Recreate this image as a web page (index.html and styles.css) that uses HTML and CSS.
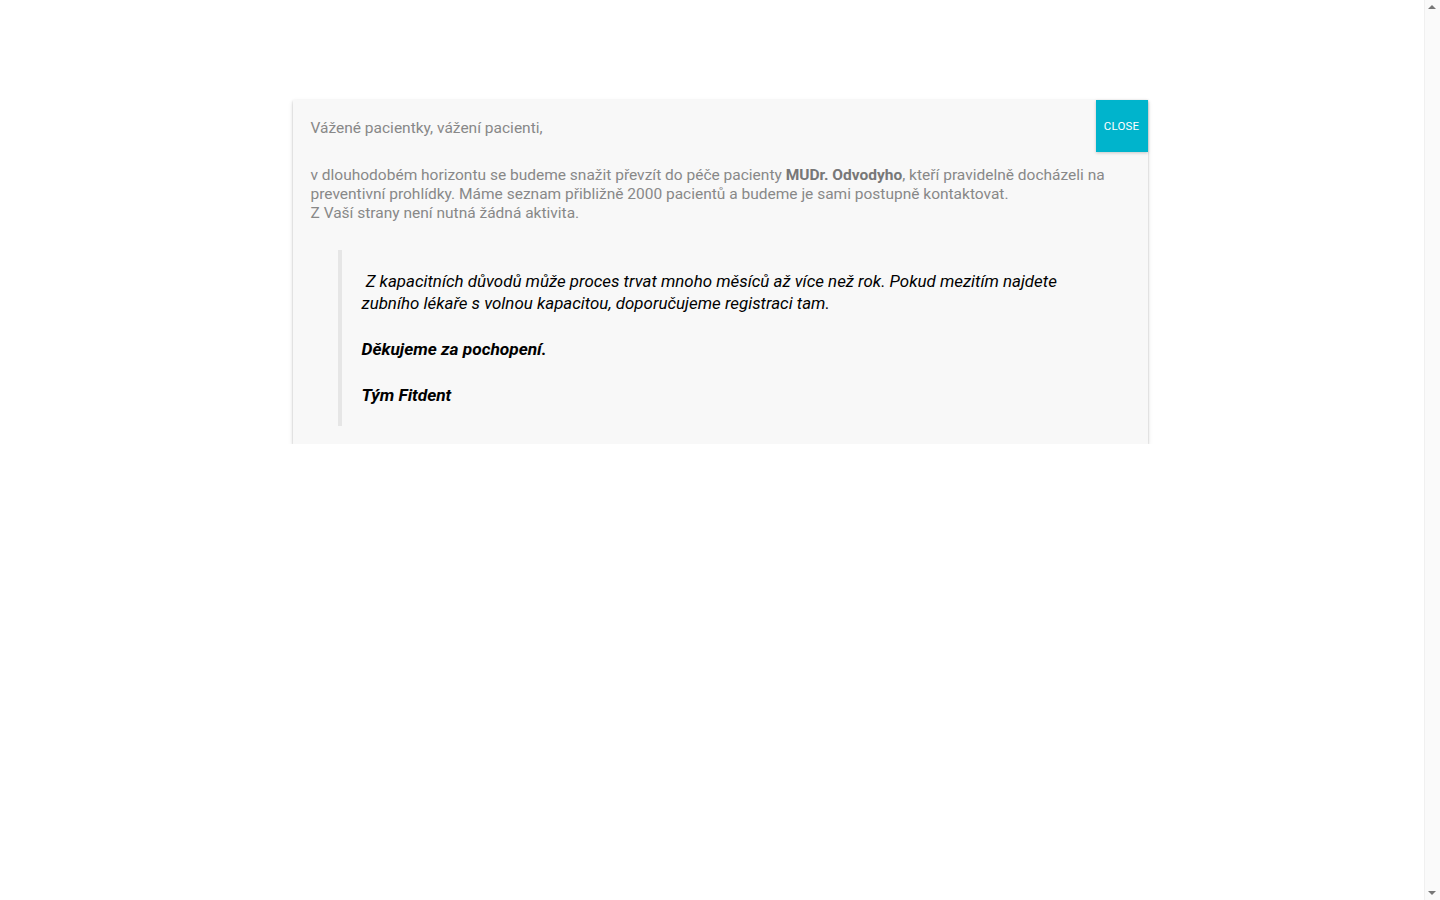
FILE: index.html
```html
<!DOCTYPE html>
<html lang="cs">
<head>
<meta charset="utf-8">
<title>Fitdent</title>
<link rel="stylesheet" href="styles.css">
</head>
<body>
<div class="page">
  <div class="modal">
    <button class="close" type="button">CLOSE</button>
    <div class="modal-body">
      <p class="greet">Vážené pacientky, vážení pacienti,</p>
      <p class="intro">v dlouhodobém horizontu se budeme snažit převzít do péče pacienty <strong>MUDr. Odvodyho</strong>, kteří pravidelně docházeli na preventivní prohlídky. Máme seznam přibližně 2000 pacientů a budeme je sami postupně kontaktovat.<br>Z Vaší strany není nutná žádná aktivita.</p>
      <blockquote class="quote">
        <p>&nbsp;Z kapacitních důvodů může proces trvat mnoho měsíců až více než rok. Pokud mezitím najdete zubního lékaře s volnou kapacitou, doporučujeme registraci tam.</p>
        <p><strong>Děkujeme za pochopení.</strong></p>
        <p><strong>Tým Fitdent</strong></p>
      </blockquote>
    </div>
  </div>
</div>
<div class="scrollbar" aria-hidden="true">
  <span class="arrow up"></span>
  <span class="arrow down"></span>
</div>
</body>
</html>
```
FILE: styles.css
```css
html {
  background: #fff;
}
body {
  margin: 0;
  font-family: Roboto, "Noto Sans", sans-serif;
}
.page {
  padding-top: 100px;
}
.modal {
  position: relative;
  width: 855px;
  margin: 0 auto;
  background: #f8f8f8;
  box-shadow: 0 1px 2px rgba(0, 0, 0, 0.2), 0 2px 5px rgba(0, 0, 0, 0.12);
}
.close {
  position: absolute;
  top: 0;
  right: 0;
  width: 52px;
  height: 52px;
  border: 0;
  padding: 0;
  background: #00b4cc;
  color: #fff;
  font-family: Roboto, sans-serif;
  font-size: 11.5px;
  letter-spacing: 0.2px;
  box-shadow: 0 1px 3px rgba(0, 0, 0, 0.2);
  cursor: pointer;
}
.modal-body {
  padding: 19px 18px 18px 18px;
  color: #888;
  font-size: 15.5px;
  line-height: 19px;
}
.modal-body p {
  margin: 0;
}
.greet {
  margin-bottom: 28px !important;
}
.intro strong {
  color: #777;
  font-weight: 700;
}
.quote {
  margin: 27px 0 0 27px;
  padding: 20px 40px 20px 20px;
  border-left: 4px solid #e6e6e6;
  color: #000;
  font-style: italic;
  font-size: 16.9px;
  line-height: 22px;
}
.quote p + p {
  margin-top: 24px;
}
.quote strong {
  font-weight: 700;
  font-size: 17.3px;
}
.scrollbar {
  position: fixed;
  top: 0;
  right: 0;
  bottom: 0;
  width: 15px;
  background: #fafafa;
  border-left: 1px solid #f0f0f0;
}
.arrow {
  position: absolute;
  left: 3px;
  width: 0;
  height: 0;
  border-left: 4px solid transparent;
  border-right: 4px solid transparent;
}
.arrow.up {
  top: 5px;
  border-bottom: 4px solid #777;
}
.arrow.down {
  bottom: 5px;
  border-top: 4px solid #777;
}
```
